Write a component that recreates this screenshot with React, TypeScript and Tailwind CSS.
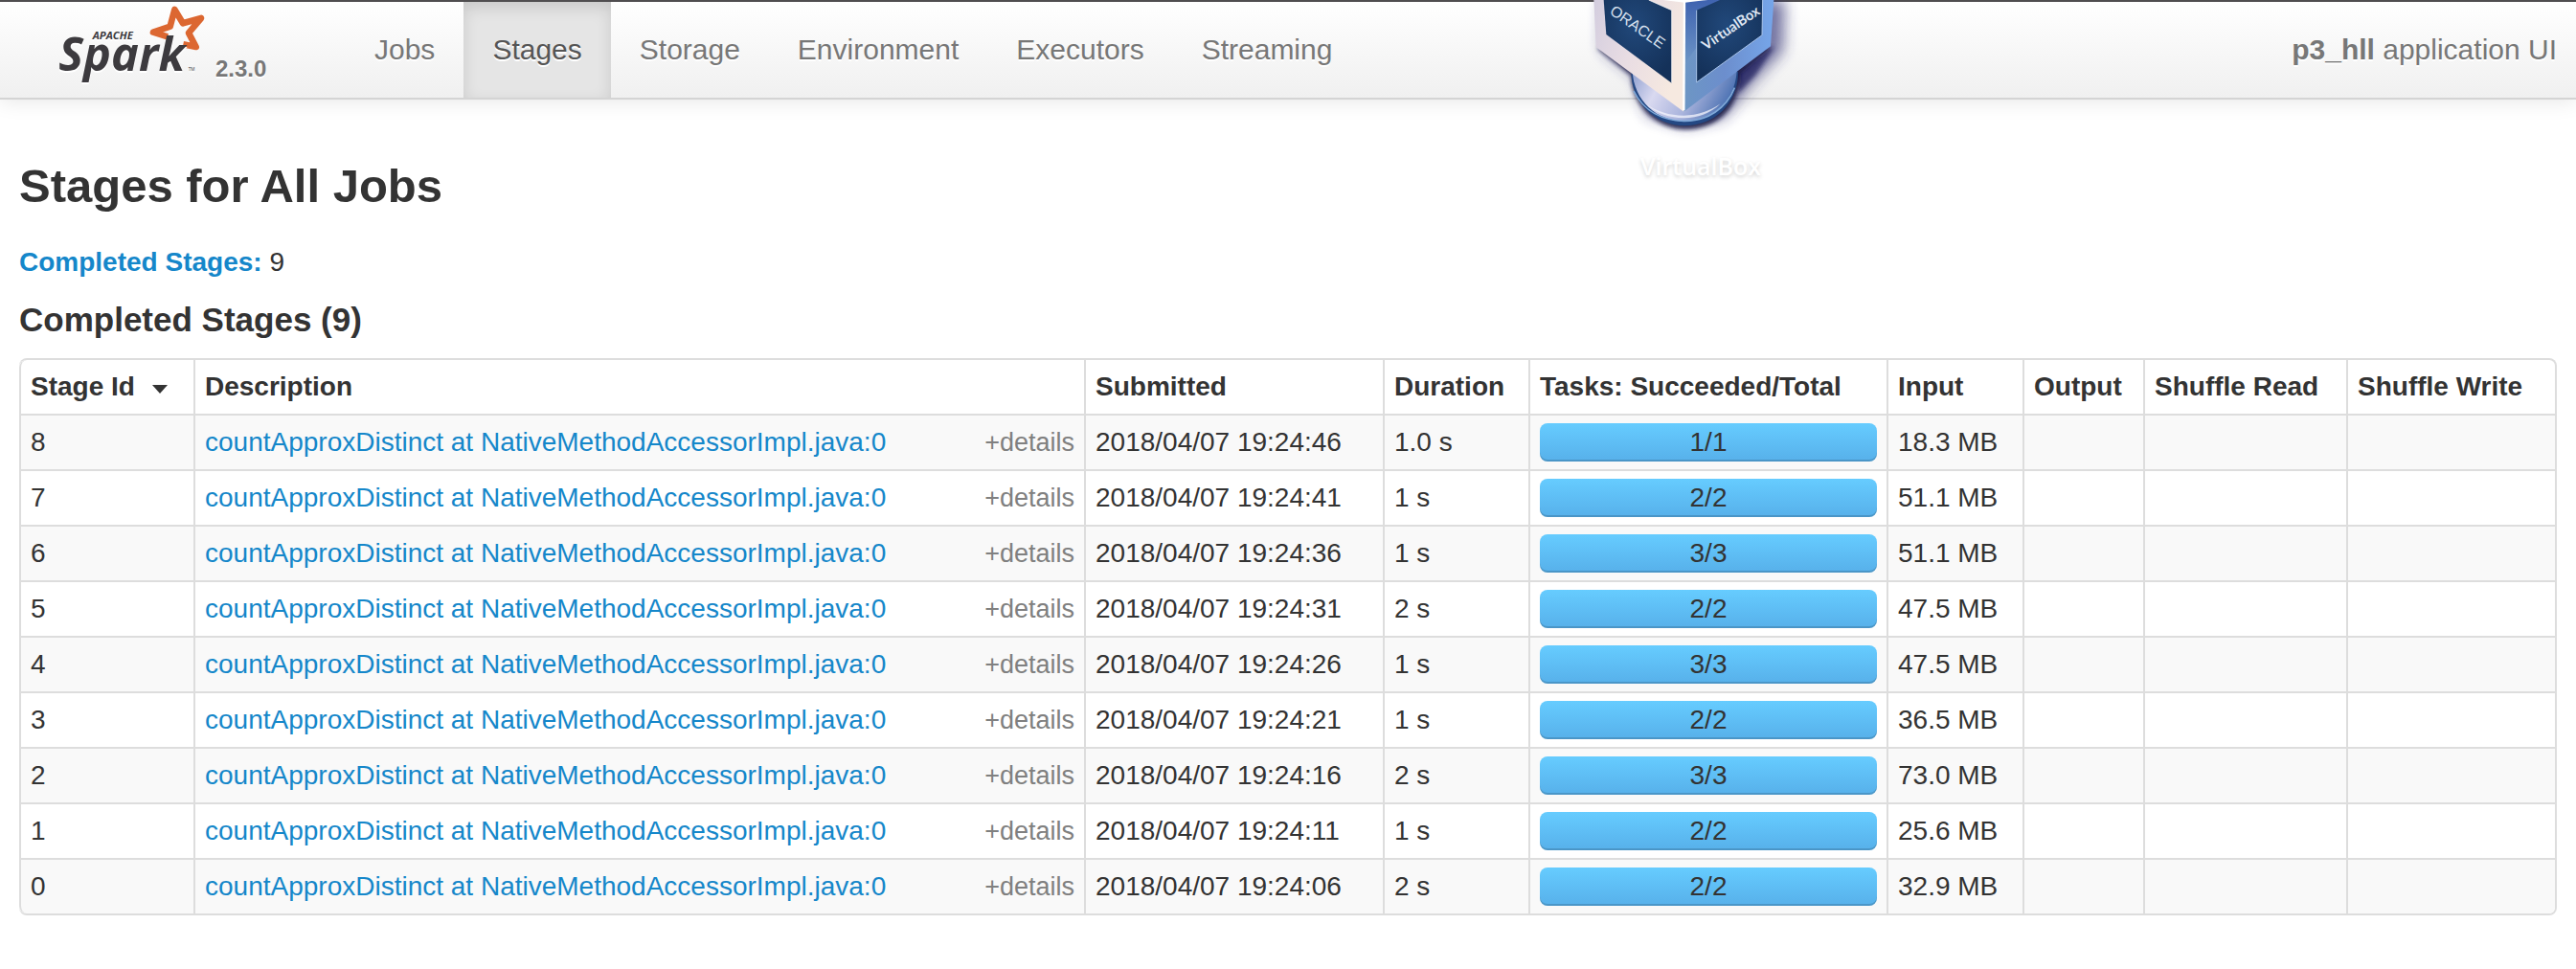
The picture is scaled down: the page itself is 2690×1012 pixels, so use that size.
import React from "react";

const tabs = ["Jobs", "Stages", "Storage", "Environment", "Executors", "Streaming"];

const stages = [
  { id: 8, time: "19:24:46", duration: "1.0 s", tasks: 1, input: "18.3 MB" },
  { id: 7, time: "19:24:41", duration: "1 s", tasks: 2, input: "51.1 MB" },
  { id: 6, time: "19:24:36", duration: "1 s", tasks: 3, input: "51.1 MB" },
  { id: 5, time: "19:24:31", duration: "2 s", tasks: 2, input: "47.5 MB" },
  { id: 4, time: "19:24:26", duration: "1 s", tasks: 3, input: "47.5 MB" },
  { id: 3, time: "19:24:21", duration: "1 s", tasks: 2, input: "36.5 MB" },
  { id: 2, time: "19:24:16", duration: "2 s", tasks: 3, input: "73.0 MB" },
  { id: 1, time: "19:24:11", duration: "1 s", tasks: 2, input: "25.6 MB" },
  { id: 0, time: "19:24:06", duration: "2 s", tasks: 2, input: "32.9 MB" },
];

const headCell = "border-l-2 border-[#ddd] px-[10px] py-2 text-left font-bold whitespace-nowrap";
const cell = "border-l-2 border-t-2 border-[#ddd] px-[10px] py-2 whitespace-nowrap";

function SparkLogo() {
  return (
    <svg viewBox="180 6 480 300" className="h-[100px] w-[160px]" role="img" aria-label="Apache Spark">
      <path
        d="M525 115 L480 101 L533 83 L547 30 L573 73 L630 57 L591 103 L614 147 L574 139"
        fill="none"
        stroke="#dc6731"
        strokeWidth="20"
        strokeLinejoin="round"
      />
      <text x="290" y="122" fontFamily="Open Sans" fontSize="34" fontWeight="700" fontStyle="italic" fill="#3c3a3e">
        APACHE
      </text>
      <text x="184" y="223" fontFamily="Open Sans" fontSize="146" fontWeight="700" fontStyle="italic" fill="#3c3a3e">
        Spark
      </text>
      <text x="590" y="223" fontFamily="Open Sans" fontSize="14" fill="#3c3a3e">
        TM
      </text>
    </svg>
  );
}

function VirtualBoxIcon() {
  return (
    <svg viewBox="0 0 840 450" className="h-[150px] w-[280px]" role="img" aria-label="Oracle VirtualBox">
      <defs>
        <linearGradient id="leftFace" x1="0" y1="0" x2="1" y2="0.4">
          <stop offset="0" stopColor="#d3cddf" />
          <stop offset="0.5" stopColor="#e9dde3" />
          <stop offset="1" stopColor="#f6e9e0" />
        </linearGradient>
        <linearGradient id="rightFace" x1="0" y1="0" x2="1" y2="0">
          <stop offset="0" stopColor="#6d96c4" />
          <stop offset="0.45" stopColor="#6c8ecd" />
          <stop offset="1" stopColor="#76a6ea" />
        </linearGradient>
        <linearGradient id="rightTop" x1="0" y1="0" x2="0" y2="1">
          <stop offset="0" stopColor="#3f63b0" />
          <stop offset="1" stopColor="#3f63b0" stopOpacity="0" />
        </linearGradient>
        <radialGradient id="panel" cx="0.45" cy="0.3" r="0.7">
          <stop offset="0" stopColor="#21487a" />
          <stop offset="1" stopColor="#143159" />
        </radialGradient>
        <linearGradient id="disc" x1="0" y1="0" x2="1" y2="0.25">
          <stop offset="0" stopColor="#8e9fcf" />
          <stop offset="0.3" stopColor="#d9d9f0" />
          <stop offset="0.65" stopColor="#a9b3dc" />
          <stop offset="1" stopColor="#4f74b4" />
        </linearGradient>
        <filter id="blurWide" x="-30%" y="-30%" width="160%" height="160%">
          <feGaussianBlur stdDeviation="22" />
        </filter>
        <filter id="blurTight" x="-30%" y="-30%" width="160%" height="160%">
          <feGaussianBlur stdDeviation="7" />
        </filter>
      </defs>
      <path d="M160 0 L160 155 L270 240 L300 360 L420 395 L540 370 L630 260 L726 160 L732 0 Z" fill="#2c2c70" opacity="0.65" filter="url(#blurWide)" />
      <path d="M580 225 L700 145 L640 235 L588 290 Z" fill="#1c1c5c" opacity="0.7" filter="url(#blurTight)" />
      <path d="M142 150 L250 236 C252 330 330 405 420 405 C520 405 588 340 592 230 L690 148 Z" fill="#14143f" opacity="0.85" filter="url(#blurTight)" />
      <path d="M250 225 C250 320 325 394 418 394 C510 394 585 325 585 225 Z" fill="#244883" />
      <path d="M254 222 C258 315 330 380 418 380 C506 380 576 315 581 222 Z" fill="url(#disc)" />
      <path d="M258 285 C290 350 350 377 415 379 C490 380 548 340 574 275" fill="none" stroke="#7fa8d8" strokeWidth="5" />
      <path d="M295 325 C360 385 470 385 530 325 C490 352 450 362 415 362 C370 362 330 350 295 325 Z" fill="#f4f4fc" opacity="0.75" />
      <path d="M133 0 L140 148 L415 350 L420 340 L420 0 Z" fill="url(#leftFace)" />
      <path d="M418 0 L697 0 L687 145 L415 350 Z" fill="url(#rightFace)" />
      <path d="M418 0 L560 0 L418 200 Z" fill="url(#rightTop)" />
      <path d="M350 0 L418 8 L490 0 Z" fill="#ffffff" />
      <path d="M417 4 L415 346" stroke="#ffffff" strokeWidth="7" />
      <path d="M164 0 L172 108 L377 260 L377 32 L305 0 Z" fill="url(#panel)" />
      <path d="M377 260 L377 32 L305 0" fill="none" stroke="#ffffff" strokeWidth="3" opacity="0.7" />
      <path d="M528 0 L455 32 L455 258 L660 110 L662 0 Z" fill="url(#panel)" />
      <path d="M455 32 L455 258 L660 110 L662 0" fill="none" stroke="#a9c4ea" strokeWidth="3" />
      <text x="180" y="41" transform="rotate(35 180 41)" fontFamily="Liberation Sans" fontSize="48" fill="#d7e0ee">
        ORACLE
      </text>
      <text x="484" y="158" transform="rotate(-34 484 158)" fontFamily="Lato" fontSize="44" fontWeight="700" fill="#dfe6f2">
        VirtualBox
      </text>
    </svg>
  );
}

function DesktopIcon() {
  return (
    <div className="pointer-events-none absolute top-0 left-[1620px] flex w-[280px] flex-col items-center">
      <VirtualBoxIcon />
      <span className="pl-8 font-['Open_Sans'] text-[25px] leading-[46px] font-semibold text-white [text-shadow:0_2px_4px_rgba(0,0,0,0.18)]">
        VirtualBox
      </span>
    </div>
  );
}

export default function App() {
  return (
    <div className="relative min-h-screen bg-white font-['Liberation_Sans',Arial,sans-serif] text-[28px] leading-10 text-[#333]">
      <header className="flex border-t-2 border-b-2 border-t-[#504e50] border-b-[#d4d4d4] bg-linear-to-b from-white to-[#f0f0f0] pr-5 text-[30px] text-[#777] shadow-[0_2px_20px_rgba(0,0,0,0.1)] [text-shadow:0_2px_0_#fff]">
        <a href="#" className="ml-[60px] flex w-[301px] items-end">
          <SparkLogo />
          <span className="ml-[5px] pb-[14px] text-2xl leading-8 font-bold">2.3.0</span>
        </a>
        <nav className="flex">
          {tabs.map((tab) => (
            <a
              key={tab}
              href="#"
              aria-current={tab === "Stages" ? "page" : undefined}
              className="px-[30px] py-[30px] aria-[current=page]:bg-[#e5e5e5] aria-[current=page]:text-[#555] aria-[current=page]:shadow-[inset_0_6px_16px_rgba(0,0,0,0.125)]"
            >
              {tab}
            </a>
          ))}
        </nav>
        <p className="ml-auto py-[30px]">
          <strong>p3_hll</strong> application UI
        </p>
      </header>

      <main className="px-5 pt-[50px]">
        <h1 className="mb-5 text-[49px] leading-[80px] font-bold">Stages for All Jobs</h1>
        <p className="mb-5">
          <a href="#completed" className="font-bold text-[#1587ca]">
            Completed Stages:
          </a>{" "}
          9
        </p>
        <h2 id="completed" className="mb-5 text-[35px] leading-10 font-bold">
          Completed Stages (9)
        </h2>

        <table className="w-full table-fixed border-separate border-spacing-0 overflow-hidden rounded-lg border-2 border-l-0 border-[#ddd]">
          <colgroup>
            <col className="w-[182px]" />
            <col />
            <col className="w-[312px]" />
            <col className="w-[152px]" />
            <col className="w-[374px]" />
            <col className="w-[142px]" />
            <col className="w-[126px]" />
            <col className="w-[212px]" />
            <col className="w-[218px]" />
          </colgroup>
          <thead>
            <tr>
              <th className={headCell + " rounded-tl-lg"} aria-sort="descending">
                <button type="button" className="flex items-center gap-[18px] font-bold">
                  Stage Id
                  <svg viewBox="0 0 16 9" className="mt-1 h-[9px] w-4" aria-hidden="true">
                    <path d="M0 0 H16 L8 9 Z" fill="#333" />
                  </svg>
                </button>
              </th>
              <th className={headCell}>Description</th>
              <th className={headCell}>Submitted</th>
              <th className={headCell}>Duration</th>
              <th className={headCell}>Tasks: Succeeded/Total</th>
              <th className={headCell}>Input</th>
              <th className={headCell}>Output</th>
              <th className={headCell}>Shuffle Read</th>
              <th className={headCell}>Shuffle Write</th>
            </tr>
          </thead>
          <tbody>
            {stages.map((s) => (
              <tr key={s.id} className="group odd:bg-[#f9f9f9]">
                <td className={cell + " group-last:rounded-bl-lg"}>{s.id}</td>
                <td className={cell}>
                  <div className="flex justify-between">
                    <a href="#" className="text-[#1587ca]">
                      countApproxDistinct at NativeMethodAccessorImpl.java:0
                    </a>
                    <button type="button" className="text-[27px] text-[#808080]">
                      +details
                    </button>
                  </div>
                </td>
                <td className={cell}>2018/04/07 {s.time}</td>
                <td className={cell}>{s.duration}</td>
                <td className={cell}>
                  <div className="rounded-lg bg-linear-to-b from-[#66ccff] to-[#57b0ea] text-center shadow-[inset_0_-2px_0_rgba(0,0,0,0.15)]">
                    {s.tasks}/{s.tasks}
                  </div>
                </td>
                <td className={cell}>{s.input}</td>
                <td className={cell} />
                <td className={cell} />
                <td className={cell} />
              </tr>
            ))}
          </tbody>
        </table>
      </main>

      <DesktopIcon />
    </div>
  );
}
